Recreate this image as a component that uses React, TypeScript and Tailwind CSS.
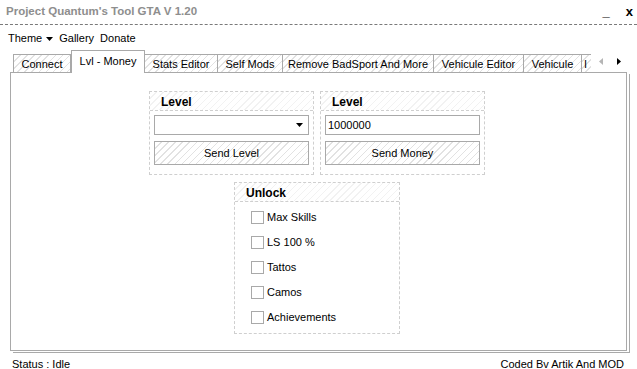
import React from "react"

const hatch =
  "bg-[repeating-linear-gradient(135deg,#ffffff_0px,#ffffff_4px,#e2e2e2_4px,#e2e2e2_5px)]"
const hatchLight =
  "bg-[repeating-linear-gradient(135deg,#ffffff_0px,#ffffff_4px,#f2f2f2_4px,#f2f2f2_5px)]"

const tabs = [
  { label: "Connect", w: "w-[58px]" },
  { label: "Lvl - Money", w: "w-[74px]", active: true },
  { label: "Stats Editor", w: "w-[73px]" },
  { label: "Self Mods", w: "w-[65px]" },
  { label: "Remove BadSport And More", w: "w-[151px]" },
  { label: "Vehicule Editor", w: "w-[90px]" },
  { label: "Vehicule", w: "w-[58px]" },
]

const unlocks = ["Max Skills", "LS 100 %", "Tattos", "Camos", "Achievements"]

const Triangle = ({ dir = "down", className = "" }: { dir?: "down" | "left" | "right"; className?: string }) => {
  const points =
    dir === "down" ? "0,0 7,0 3.5,4" : dir === "left" ? "4,0 4,7 0,3.5" : "0,0 0,7 4,3.5"
  const size = dir === "down" ? { w: 7, h: 4 } : { w: 4, h: 7 }
  return (
    <svg width={size.w} height={size.h} viewBox={`0 0 ${size.w} ${size.h}`} className={className}>
      <polygon points={points} fill="currentColor" />
    </svg>
  )
}

const GroupHeader = ({ title }: { title: string }) => (
  <div className={`h-[19px] flex items-center pl-[11px] pt-[2px] border-b border-dashed border-[#cfcfcf] ${hatchLight}`}>
    <span className="font-bold text-[12px] text-black">{title}</span>
  </div>
)

const LevelGroup = ({ title, children, button }: { title: string; children: React.ReactNode; button: string }) => (
  <div className="w-[165px] border border-dashed border-[#cfcfcf] bg-white">
    <GroupHeader title={title} />
    <div className="px-[4px] pt-[4px] pb-[9px] flex flex-col gap-[6px]">
      {children}
      <div
        className={`h-[24px] border border-[#a9a9a9] flex items-center justify-center text-[11px] text-black ${hatch}`}
      >
        {button}
      </div>
    </div>
  </div>
)

export default function App() {
  return (
    <div className="w-[637px] h-[369px] overflow-hidden bg-white flex flex-col font-['Liberation_Sans',Arial,sans-serif] text-[11px] text-black">
      {/* title bar */}
      <div className="shrink-0 h-[25px] flex items-center justify-between pl-[6px] pr-[4px] pb-[1px] border-b border-dashed border-[#7a7a7a]">
        <span className="font-bold text-[11.5px] text-[#8e8e8e]">Project Quantum's Tool GTA V 1.20</span>
        <div className="flex items-center gap-[16px] font-bold text-[13px] text-black">
          <span className="leading-none">_</span>
          <span className="leading-none">x</span>
        </div>
      </div>

      {/* menu */}
      <div className="shrink-0 h-[24px] flex items-center pl-[8px] pt-[3px] gap-[6px] text-[11px]">
        <span className="flex items-center gap-[4px]">
          Theme <Triangle />
        </span>
        <span>Gallery</span>
        <span>Donate</span>
      </div>

      {/* tabs */}
      <div className="shrink-0 h-[23px] flex items-end">
        <div className="ml-[13px] w-[578px] h-[24px] overflow-hidden flex items-start self-start">
          <div className="flex items-end h-[24px]">
            {tabs.map((t, i) =>
              t.active ? (
                <div
                  key={t.label}
                  className={`${t.w} shrink-0 h-[24px] mb-[-1px] relative z-10 bg-white border-t border-x border-[#a9a9a9] flex items-center justify-center pb-[3px]`}
                >
                  {t.label}
                </div>
              ) : (
                <div
                  key={t.label}
                  className={`${t.w} shrink-0 h-[19px] border-t border-r border-[#a9a9a9] ${i === 0 ? "border-l" : ""} flex items-center justify-center ${hatch}`}
                >
                  {t.label}
                </div>
              )
            )}
            <div className={`w-[12px] shrink-0 h-[19px] border-t border-[#a9a9a9] flex items-center pl-[2px] ${hatch}`}>
              I
            </div>
          </div>
        </div>
        <div className="self-center flex items-center gap-[14px] ml-[8px] mt-[2px]">
          <Triangle dir="left" className="text-[#b5b5b5]" />
          <Triangle dir="right" className="text-black" />
        </div>
      </div>

      {/* panel */}
      <div className="shrink-0 ml-[10px] w-[617px] h-[279px] border border-[#a9a9a9] bg-white shadow-[2px_1px_0_#ffffff,3px_2px_0_#a9a9a9] flex flex-col items-center pt-[18px] pr-[3px] gap-[7px]">
        <div className="flex gap-[6px]">
          <LevelGroup title="Level" button="Send Level">
            <div className="h-[20px] border border-[#a9a9a9] bg-white flex items-center justify-end pr-[5px]">
              <Triangle />
            </div>
          </LevelGroup>
          <LevelGroup title="Level" button="Send Money">
            <div className="h-[20px] border border-[#a9a9a9] bg-white flex items-center pl-[2px]">1000000</div>
          </LevelGroup>
        </div>

        <div className="w-[166px] border border-dashed border-[#cfcfcf] bg-white">
          <GroupHeader title="Unlock" />
          <div className="pt-[3px] pb-[3px] pl-[16px] flex flex-col">
            {unlocks.map((u) => (
              <div key={u} className="h-[25px] flex items-center gap-[3px]">
                <div className="w-[13px] h-[13px] border border-[#a9a9a9] bg-white" />
                <span>{u}</span>
              </div>
            ))}
          </div>
        </div>
      </div>

      {/* status */}
      <div className="flex-1 min-h-0 pt-[7px] flex items-center justify-between pl-[12px] pr-[13px] leading-[12px]">
        <span>Status : Idle</span>
        <span>Coded Bv Artik And MOD</span>
      </div>
    </div>
  )
}
